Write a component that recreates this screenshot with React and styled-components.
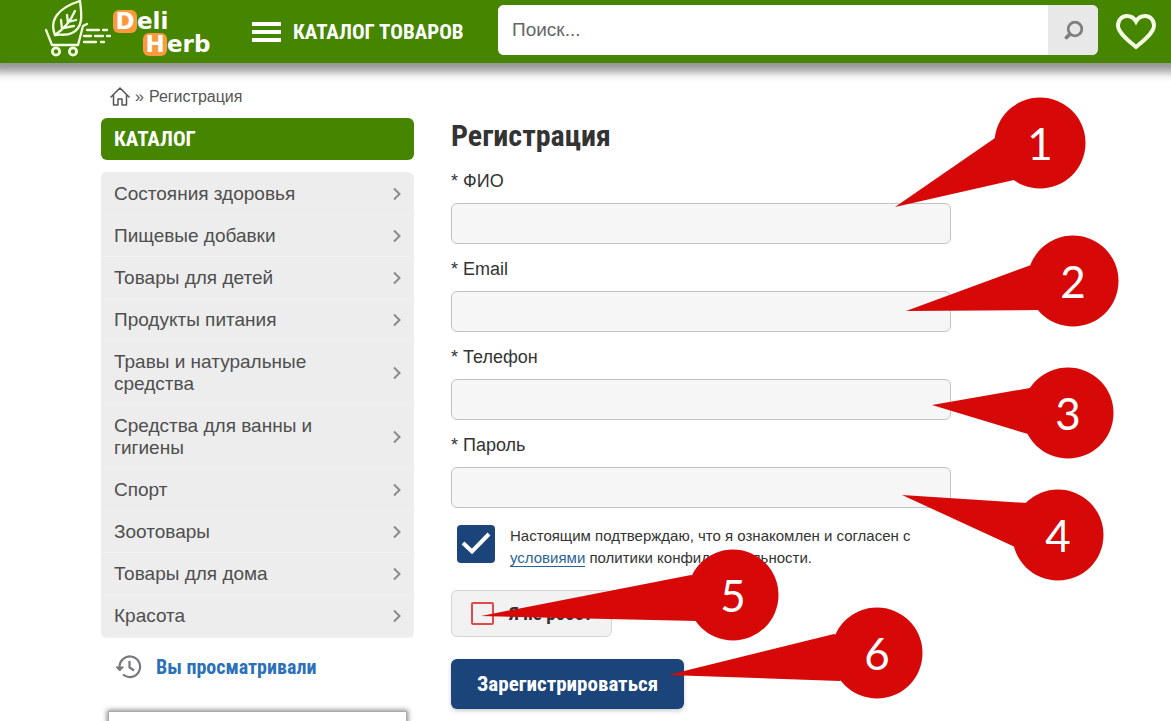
import React from 'react'
import styled, { createGlobalStyle } from 'styled-components'

const GlobalStyle = createGlobalStyle`
  * {
    box-sizing: border-box;
  }
  body {
    margin: 0;
    background: #fff;
    color: #333;
    font-family: "Liberation Sans", Arial, sans-serif;
  }
`

const condensed = '"Roboto Condensed", "Liberation Sans Narrow", Roboto, sans-serif'

const Page = styled.div`
  position: relative;
  height: 100vh;
  overflow: hidden;
`

const Header = styled.header`
  display: flex;
  align-items: center;
  height: 63px;
  padding: 0 15px 0 45px;
  background: #458500;
  box-shadow: 0 0 9px 9px rgba(0, 0, 0, .42);
`

const Logo = styled.a`
  display: flex;
  align-self: flex-start;
  width: 207px;
  color: #fff;
  text-decoration: none;
`

const LogoText = styled.span`
  display: flex;
  flex-direction: column;
  padding-top: 10px;
  font: bold 23px/23px "DejaVu Sans", sans-serif;
`

const LogoLine = styled.span`
  display: flex;
  padding-left: ${props => props.$indent ? 30 : 0}px;
`

const LogoLetter = styled.span`
  width: 24px;
  border-radius: 6px;
  background: #fb9a3c;
  text-align: center;
`

const MenuButton = styled.button`
  display: flex;
  align-items: center;
  gap: 12px;
  width: 246px;
  padding: 0;
  border: 0;
  background: none;
  color: #fff;
  font: bold 21px/26px ${condensed};
  white-space: nowrap;
`

const Search = styled.form`
  display: flex;
  flex: 1;
  height: 50px;
  margin: 0 18px 3px 0;
  border-radius: 6px;
  background: #fff;
  overflow: hidden;
`

const SearchInput = styled.input`
  flex: 1;
  min-width: 0;
  padding: 0 14px;
  border: 0;
  background: #fff;
  font: 19px/24px "Liberation Sans", Arial, sans-serif;
  &::placeholder {
    color: #666;
    opacity: 1;
  }
`

const SearchButton = styled.button`
  display: flex;
  align-items: center;
  justify-content: center;
  width: 50px;
  padding: 0;
  border: 0;
  background: #e8e8e8;
`

const Favorites = styled.a`
  display: flex;
`

const Breadcrumbs = styled.nav`
  display: flex;
  align-items: center;
  gap: 5px;
  height: 55px;
  padding: 12px 0 0 110px;
  color: #555;
  font-size: 16px;
  line-height: 20px;
`

const HomeLink = styled.a`
  display: flex;
`

const Columns = styled.div`
  display: flex;
  align-items: flex-start;
  gap: 37px;
  padding-left: 101px;
`

const Sidebar = styled.aside`
  flex: 0 0 313px;
`

const SidebarTitle = styled.h2`
  margin: 0 0 12px;
  padding: 0 13px;
  border-radius: 6px;
  background: #458500;
  color: #fff;
  font: bold 21px/42px ${condensed};
`

const Categories = styled.ul`
  margin: 0;
  padding: 1px 0;
  border-radius: 6px;
  background: #ededed;
  list-style: none;
`

const Category = styled.a`
  display: flex;
  align-items: center;
  justify-content: space-between;
  padding: 10px 12px 10px 13px;
  box-shadow: inset 0 -1px #f1f1f1;
  color: #4f4f4f;
  font-size: 19px;
  line-height: 22px;
  text-decoration: none;
`

const CategoryName = styled.span`
  max-width: 230px;
`

const Viewed = styled.a`
  display: flex;
  align-items: center;
  gap: 14px;
  margin: 16px 14px 31px;
  color: #2b71ba;
  font: bold 20px/26px ${condensed};
  text-decoration: none;
`

const Banner = styled.div`
  height: 120px;
  margin: 0 7px;
  border: 1px solid #aaa;
  box-shadow: 0 0 5px 1px #888;
`

const Main = styled.main`
  flex: 1;
  min-width: 0;
  max-width: 500px;
`

const Title = styled.h1`
  margin: 0 0 15px;
  font: bold 30px/36px ${condensed};
`

const Field = styled.label`
  display: flex;
  flex-direction: column;
  gap: 10px;
  margin-bottom: 13px;
  font-size: 18px;
  line-height: 24px;
`

const TextInput = styled.input`
  height: 41px;
  padding: 0 12px;
  border: 1px solid #c2c2c2;
  border-radius: 6px;
  background: #f6f6f6;
  font: inherit;
`

const Agreement = styled.div`
  display: flex;
  gap: 15px;
  margin: 17px 0 21px 6px;
  font-size: 15px;
  line-height: 22px;
`

const AgreeBox = styled.span`
  display: grid;
  flex: none;
  width: 38px;
  height: 38px;
  > * {
    grid-area: 1 / 1;
  }
  svg {
    pointer-events: none;
  }
`

const AgreeInput = styled.input`
  appearance: none;
  width: 38px;
  height: 38px;
  margin: 0;
  border-radius: 4px;
  background: #1a447a;
`

const TermsLink = styled.a`
  border-bottom: 1px solid #2a6496;
  color: #2a6496;
  text-decoration: none;
`

const Robot = styled.label`
  display: flex;
  align-items: center;
  gap: 15px;
  width: 161px;
  height: 47px;
  margin-bottom: 22px;
  padding-left: 19px;
  border: 1px solid #d5d5d5;
  border-radius: 6px;
  background: #f2f2f2;
  font: bold 19px/24px ${condensed};
`

const RobotInput = styled.input`
  appearance: none;
  width: 23px;
  height: 23px;
  margin: 0;
  border: 2px solid #de4b4b;
  border-radius: 2px;
`

const Submit = styled.button`
  height: 50px;
  padding: 0 26px;
  border: 0;
  border-radius: 6px;
  background: #1a447a;
  box-shadow: 0 2px 4px rgba(0, 0, 0, .2);
  color: #fff;
  font: bold 21px/24px ${condensed};
`

const Callouts = styled.svg`
  position: absolute;
  top: 0;
  left: 0;
  overflow: visible;
  pointer-events: none;
  fill: #d60808;
  text {
    fill: #fff;
    font: 44px Lato, sans-serif;
    text-anchor: middle;
  }
`

const categories = [
  'Состояния здоровья',
  'Пищевые добавки',
  'Товары для детей',
  'Продукты питания',
  'Травы и натуральные средства',
  'Средства для ванны и гигиены',
  'Спорт',
  'Зоотовары',
  'Товары для дома',
  'Красота'
]

const fields = [
  { label: 'ФИО', name: 'name', type: 'text' },
  { label: 'Email', name: 'email', type: 'email' },
  { label: 'Телефон', name: 'phone', type: 'tel' },
  { label: 'Пароль', name: 'password', type: 'password' }
]

const callouts = [
  { x: 1040, y: 143, tail: '895,207 995,138 1040,143 1014,180' },
  { x: 1073, y: 281, tail: '906,311 1031,265 1073,281 1040,310' },
  { x: 1068, y: 413, tail: '932,405 1030,388 1068,413 1028,434' },
  { x: 1058, y: 535, tail: '902,495 1027,503 1058,535 1015,547' },
  { x: 733, y: 595, tail: '481,616 691,575 733,595 697,621' },
  { x: 877, y: 653, tail: '668,675 834,634 877,653 840,681' }
]

const CartLogo = () => (
  <svg width='68' height='60' viewBox='0 0 68 60' fill='none' stroke='#f4ffe4' strokeWidth='2.3' strokeLinecap='round' strokeLinejoin='round'>
    <path d='M1 30l6 15h26l5-19 4-2' />
    <path d='M10 35C4 20 13 8 35 1c2 15 3 27-8 32-6 3-11 1-17 2z' />
    <path d='M10 35C19 29 25 22 30 11M17 29l-1-9M23 23l-1-8M18 28l11-2M23 22l8-2' />
    <circle cx='11' cy='51.500' r='3.600' strokeWidth='2.8' />
    <circle cx='28' cy='51.500' r='3.600' strokeWidth='2.8' />
    <path d='M42 30h12M58 30h4M39 36h7M50 36h8M62 36h3M39 42h12M56 42h3' />
  </svg>
)

const MenuIcon = () => (
  <svg width='29' height='20' viewBox='0 0 29 20' fill='#fff'>
    <path d='M0 0h29v4H0zM0 8h29v4H0zM0 16h29v4H0z' />
  </svg>
)

const SearchIcon = () => (
  <svg width='20' height='20' viewBox='0 0 20 20' fill='none' stroke='#808080' strokeLinecap='round'>
    <circle cx='12' cy='9' r='6.800' strokeWidth='2.8' />
    <path d='M6.500 14.500l-3 3' strokeWidth='3.8' />
  </svg>
)

const HeartIcon = () => (
  <svg width='40' height='36' viewBox='0 0 40 36' fill='none' stroke='#f6ffe6' strokeWidth='3.9'>
    <path d='M20 33C13 27 2 19 2 11.500C2 6 6 2 11 2c4 0 7 2 9 5.500C22 4 25 2 29 2c5 0 9 4 9 9.500C38 19 27 27 20 33z' />
  </svg>
)

const HomeIcon = () => (
  <svg width='20' height='19' viewBox='0 0 20 19' fill='none' stroke='#555' strokeWidth='1.5' strokeLinejoin='round' strokeLinecap='round'>
    <path d='M1 10l9-9 9 9M3.500 8.500V18H8v-6h4v6h4.500V8.500' />
  </svg>
)

const ArrowIcon = () => (
  <svg width='10' height='14' viewBox='0 0 10 14' fill='none' stroke='#8a8a8a' strokeWidth='2'>
    <path d='M2 1.500L7.500 7 2 12.500' />
  </svg>
)

const HistoryIcon = () => (
  <svg width='27' height='24' viewBox='0 0 27 24' fill='none' stroke='#77777d' strokeWidth='2.2'>
    <path d='M4.500 12A10.300 10.300 0 1 1 8 19.500' />
    <path d='M14.500 6v6.500l4.500 3' />
    <path d='M1 12h7.500l-3.800 4z' fill='#77777d' strokeWidth='1' />
  </svg>
)

const CheckIcon = () => (
  <svg width='38' height='38' viewBox='0 0 38 38' fill='none' stroke='#fff' strokeWidth='4'>
    <path d='M6 18l9 8.500L32 9' />
  </svg>
)

const App = () => (
  <Page>
    <GlobalStyle />
    <Header>
      <Logo href='#' aria-label='Deli Herb'>
        <CartLogo />
        <LogoText>
          <LogoLine><LogoLetter>D</LogoLetter>eli</LogoLine>
          <LogoLine $indent><LogoLetter>H</LogoLetter>erb</LogoLine>
        </LogoText>
      </Logo>
      <MenuButton type='button'><MenuIcon />КАТАЛОГ ТОВАРОВ</MenuButton>
      <Search>
        <SearchInput placeholder='Поиск...' aria-label='Поиск' />
        <SearchButton type='button' aria-label='Найти'><SearchIcon /></SearchButton>
      </Search>
      <Favorites href='#' aria-label='Избранное'><HeartIcon /></Favorites>
    </Header>
    <Breadcrumbs>
      <HomeLink href='#' aria-label='Главная'><HomeIcon /></HomeLink>
      <span>»</span>
      <span>Регистрация</span>
    </Breadcrumbs>
    <Columns>
      <Sidebar>
        <SidebarTitle>КАТАЛОГ</SidebarTitle>
        <Categories>
          {categories.map(name => (
            <li key={name}>
              <Category href='#'>
                <CategoryName>{name}</CategoryName>
                <ArrowIcon />
              </Category>
            </li>
          ))}
        </Categories>
        <Viewed href='#'><HistoryIcon />Вы просматривали</Viewed>
        <Banner />
      </Sidebar>
      <Main>
        <Title>Регистрация</Title>
        <form>
          {fields.map(field => (
            <Field key={field.name}>
              <span>* {field.label}</span>
              <TextInput type={field.type} name={field.name} />
            </Field>
          ))}
          <Agreement>
            <AgreeBox>
              <AgreeInput type='checkbox' id='agree' defaultChecked />
              <CheckIcon />
            </AgreeBox>
            <label htmlFor='agree'>
              Настоящим подтверждаю, что я ознакомлен и согласен с{' '}
              <TermsLink href='#'>условиями</TermsLink> политики конфиденциальности.
            </label>
          </Agreement>
          <Robot>
            <RobotInput type='checkbox' name='robot' />
            Я не робот
          </Robot>
          <Submit type='button'>Зарегистрироваться</Submit>
        </form>
      </Main>
    </Columns>
    <Callouts width='1' height='1'>
      {callouts.map(({ x, y, tail }, i) => (
        <g key={tail}>
          <polygon points={tail} />
          <circle cx={x} cy={y} r='45.500' />
          <text x={x} y={y + 17}>{i + 1}</text>
        </g>
      ))}
    </Callouts>
  </Page>
)

export default App
